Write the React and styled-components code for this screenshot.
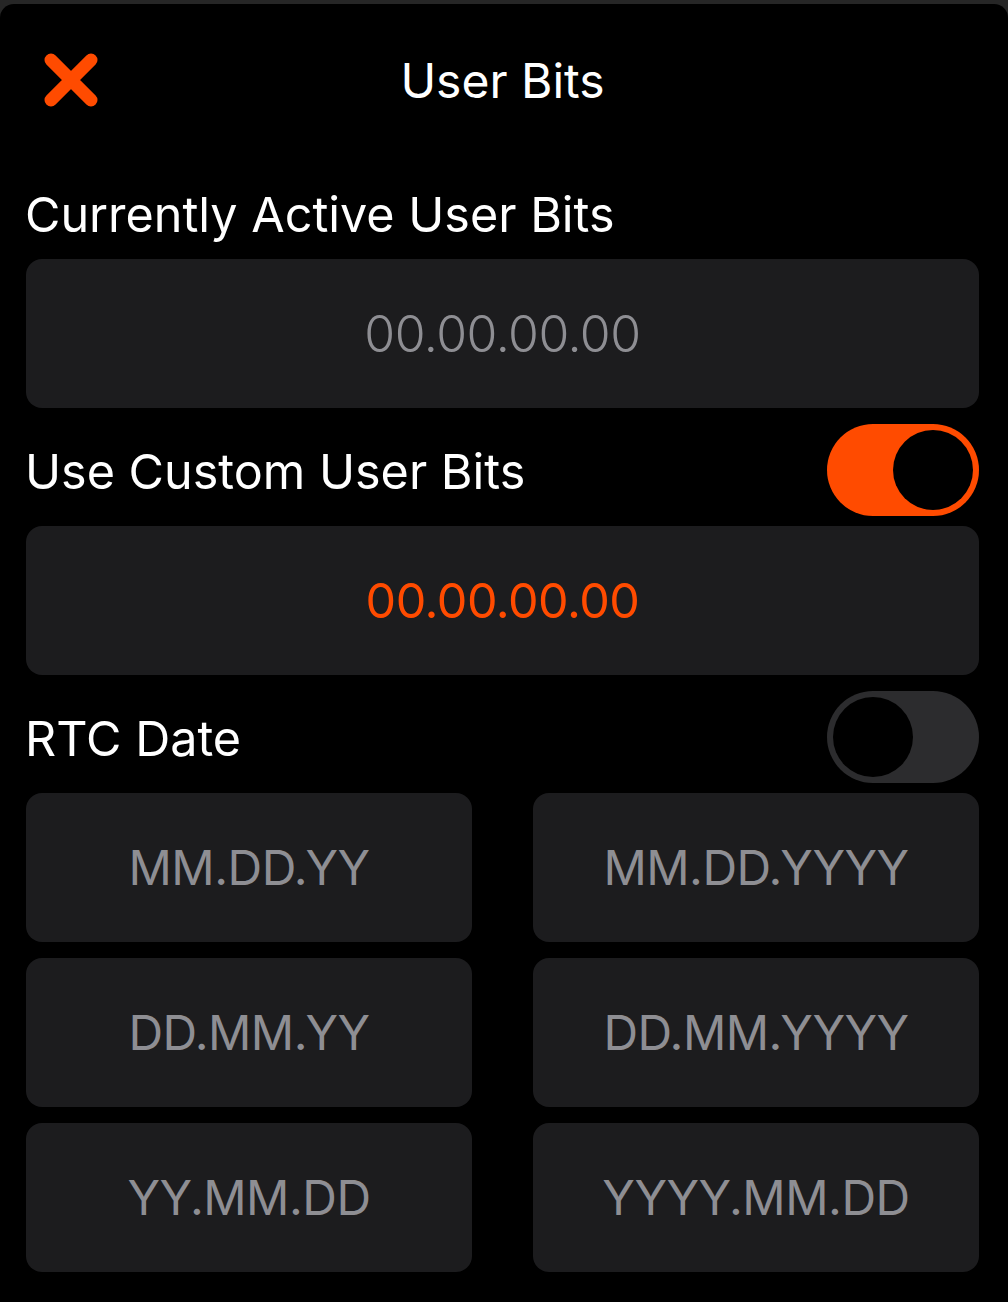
import React, { useState } from "react";
import styled, { createGlobalStyle } from "styled-components";

const ORANGE = "#ff4b00";

const GlobalStyle = createGlobalStyle`
  html, body {
    margin: 0;
    padding: 0;
    background: #262626;
  }
  body {
    font-family: Inter, "Noto Sans", "Liberation Sans", sans-serif;
    -webkit-font-smoothing: antialiased;
  }
`;

const Sheet = styled.div`
  margin-top: 4px;
  min-height: 1298px;
  background: #000;
  border-radius: 14px 14px 0 0;
  padding: 0 29px 0 26px;
  box-sizing: border-box;
  display: flex;
  flex-direction: column;
`;

const Header = styled.header`
  position: relative;
  height: 152px;
  display: flex;
  align-items: center;
  justify-content: center;
`;

const CloseButton = styled.button`
  position: absolute;
  left: 14px;
  top: 50%;
  transform: translateY(-50%);
  width: 62px;
  height: 62px;
  padding: 0;
  border: 0;
  background: none;
  cursor: pointer;
  display: flex;
  align-items: center;
  justify-content: center;
`;

const Title = styled.h1`
  margin: 0;
  color: #fff;
  font-size: 48px;
  font-weight: 400;
  letter-spacing: 0;
`;

const Row = styled.div`
  height: 92px;
  margin-top: ${(p) => p.$top || 0}px;
  margin-bottom: ${(p) => p.$bottom || 0}px;
  display: flex;
  align-items: center;
  justify-content: space-between;
`;

const Label = styled.span`
  color: #fff;
  font-size: 48.5px;
  font-weight: 400;
  letter-spacing: 0;
  margin-left: -1px;
  padding-top: 3px;
`;

const Field = styled.div`
  height: 149px;
  border-radius: 16px;
  background: #1c1c1e;
  display: flex;
  align-items: center;
  justify-content: center;
  color: ${(p) => (p.$accent ? ORANGE : "#8e8e93")};
  font-size: ${(p) => p.$size || 48}px;
  font-weight: ${(p) => (p.$light ? 300 : 400)};
  letter-spacing: -0.5px;
  cursor: pointer;
`;

const Grid = styled.div`
  display: grid;
  grid-template-columns: 1fr 1fr;
  column-gap: 61px;
  row-gap: 16px;
`;

const Track = styled.button`
  position: relative;
  width: 152px;
  height: 92px;
  padding: 0;
  border: 0;
  border-radius: 46px;
  background: ${(p) => (p.$on ? ORANGE : "#2c2c2e")};
  cursor: pointer;
  flex-shrink: 0;
`;

const Knob = styled.span`
  position: absolute;
  top: 6px;
  left: ${(p) => (p.$on ? 66 : 6)}px;
  width: 80px;
  height: 80px;
  border-radius: 50%;
  background: #000;
  transition: left 0.2s ease;
`;

function Toggle({ on, onChange }) {
  return (
    <Track $on={on} onClick={() => onChange(!on)}>
      <Knob $on={on} />
    </Track>
  );
}

const formats = [
  "MM.DD.YY",
  "MM.DD.YYYY",
  "DD.MM.YY",
  "DD.MM.YYYY",
  "YY.MM.DD",
  "YYYY.MM.DD",
];

export default function App() {
  const [custom, setCustom] = useState(true);
  const [rtc, setRtc] = useState(false);

  return (
    <>
      <GlobalStyle />
      <Sheet>
        <Header>
          <CloseButton aria-label="Close">
            <svg width="56" height="56" viewBox="0 0 56 56">
              <path
                d="M8 8 L48 48 M48 8 L8 48"
                stroke={ORANGE}
                strokeWidth="13"
                strokeLinecap="round"
                fill="none"
              />
            </svg>
          </CloseButton>
          <Title>User Bits</Title>
        </Header>

        <Row $top={11}>
          <Label>Currently Active User Bits</Label>
        </Row>
        <Field $light $size={50}>00.00.00.00</Field>

        <Row $top={16} $bottom={10}>
          <Label>Use Custom User Bits</Label>
          <Toggle on={custom} onChange={setCustom} />
        </Row>
        <Field $accent $size={48.5}>00.00.00.00</Field>

        <Row $top={16} $bottom={10}>
          <Label>RTC Date</Label>
          <Toggle on={rtc} onChange={setRtc} />
        </Row>
        <Grid>
          {formats.map((f) => (
            <Field key={f}>{f}</Field>
          ))}
        </Grid>
      </Sheet>
    </>
  );
}
